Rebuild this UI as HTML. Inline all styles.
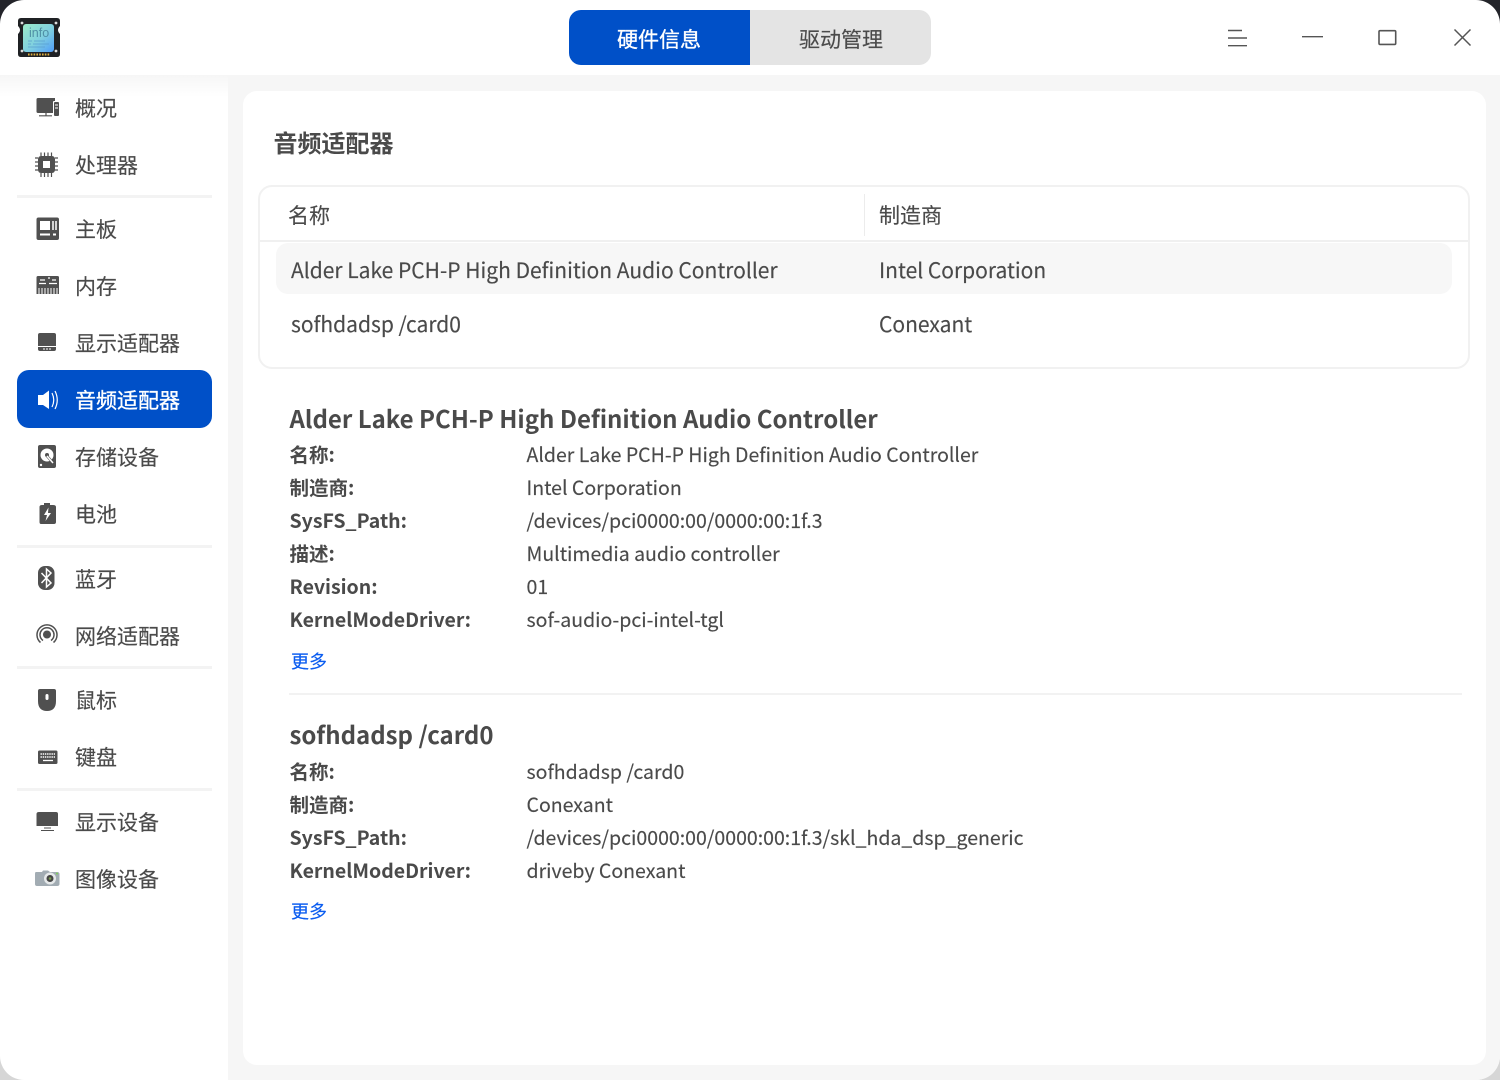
<!DOCTYPE html>
<html><head><meta charset="utf-8">
<style>
html,body{margin:0;padding:0;width:1500px;height:1080px;overflow:hidden;background:#fff}
body{font-family:"Noto Sans CJK SC","Liberation Sans",sans-serif;color:#414d68;position:relative}
.t{position:absolute;white-space:nowrap;line-height:30px;height:30px;color:#4a4a4a;-webkit-text-stroke:.15px currentColor}
.s{font-size:21px;left:75px}
.r{font-size:21px}
.d{font-size:19.5px}
.b{font-weight:700;left:289.500px;color:#4a4a4a;-webkit-text-stroke:0}
.v{left:526.500px}
.h{font-size:24px;font-weight:700;left:289.500px;color:#4a4a4a;-webkit-text-stroke:0}
.m{font-size:18px;left:291px;color:#0a5cf0}
.a{position:absolute}
svg{position:absolute;overflow:visible}
</style></head><body>
<!-- corners -->
<svg width="1500" height="1080" style="left:0;top:0">
<path d="M0 0H24A24 24 0 0 0 0 24Z" fill="#23242a"/>
<path d="M1500 0H1476A24 24 0 0 1 1500 24Z" fill="#23242a"/>
<path d="M0 1080H24A24 24 0 0 1 0 1056Z" fill="#d6d6d6"/>
<path d="M1500 1080H1476A24 24 0 0 0 1500 1056Z" fill="#d6d6d6"/>
</svg>
<!-- main bg -->
<div class="a" style="left:228px;top:75px;width:1272px;height:1005px;background:#f6f6f6;border-bottom-right-radius:24px"></div>
<div class="a" style="left:0;top:75px;width:228px;height:22px;background:linear-gradient(#f6f6f6,#fff)"></div>
<div class="a" style="left:243px;top:91px;width:1243px;height:974px;background:#fff;border-radius:14px"></div>
<!-- logo -->
<svg width="44" height="42" style="left:17px;top:17px" viewBox="0 0 44 42">
<defs><linearGradient id="g" x1="0" y1="0" x2="1" y2="1"><stop offset="0" stop-color="#9cecc8"/><stop offset=".55" stop-color="#7fcfe0"/><stop offset="1" stop-color="#4f9cf8"/></linearGradient></defs>
<path d="M4 1H40Q43 1 43 4V9Q41 11 41 13T43 17V37Q43 40 40 40H4Q1 40 1 37V17Q3 15 3 13T1 9V4Q1 1 4 1Z" fill="#1f2124"/>
<rect x="6" y="7" width="31" height="28" rx="3" fill="url(#g)"/>
<circle cx="5" cy="6" r="1.400" fill="#ddd"/><circle cx="39" cy="6" r="1.400" fill="#ddd"/><circle cx="5" cy="34" r="1.400" fill="#ddd"/><circle cx="39" cy="34" r="1.400" fill="#ddd"/>
<path d="M11 37.500H33" stroke="#e0b040" stroke-width="2" stroke-dasharray="1.600 1.200"/>
<path d="M11 24H15M17 24H28M11 27H14M16 27H32M11 30H28" stroke="#5a9fd0" stroke-width="1.200" opacity=".6"/>
<text x="12" y="20" font-family="Liberation Sans" font-size="12.500" fill="#4f8fa6">info</text>
</svg>
<!-- tabs -->
<div class="a" style="left:569px;top:10px;width:181px;height:55px;background:#0050c8;border-radius:12px 0 0 12px"></div>
<div class="a" style="left:750px;top:10px;width:181px;height:55px;background:#e4e4e4;border-radius:0 12px 12px 0"></div>
<div class="t" style="left:617px;top:24px;font-size:21px;color:#fff;-webkit-text-stroke:.35px #fff">硬件信息</div>
<div class="t" style="left:799px;top:24px;font-size:21px;color:#4a4a4a">驱动管理</div>
<!-- window buttons -->
<svg width="300" height="60" style="left:1200px;top:0" fill="none" stroke="#555" stroke-width="1.400">
<path d="M28 30.500H42M28 38H47M28 45.700H47"/>
<path d="M102 36.700H123"/>
<rect x="179" y="30.700" width="16.700" height="13.700" rx="1" stroke-width="1.600"/>
<path d="M254.500 29.500L270.500 45.500M270.500 29.500L254.500 45.500" stroke-width="1.500"/>
</svg>
<!-- sidebar dividers -->
<div class="a" style="left:17px;top:195px;width:195px;height:3px;background:#f3f3f3"></div>
<div class="a" style="left:17px;top:545px;width:195px;height:3px;background:#f3f3f3"></div>
<div class="a" style="left:17px;top:666px;width:195px;height:3px;background:#f3f3f3"></div>
<div class="a" style="left:17px;top:788px;width:195px;height:3px;background:#f3f3f3"></div>
<div class="a" style="left:17px;top:370px;width:195px;height:57.500px;background:#0050c8;border-radius:12px"></div>
<!-- sidebar icons -->
<svg width="228" height="900" style="left:0;top:0" fill="#505050">
<!-- overview -->
<path d="M38 98H55V113H38Q36.500 113 36.500 111.500V99.500Q36.500 98 38 98Z"/><path d="M39 115.800H52M46 113V116" stroke="#505050" stroke-width="1.200"/>
<rect x="53" y="101" width="6" height="15" rx="1" fill="#fff"/><rect x="54" y="102" width="5" height="14" rx="1"/><path d="M55 105H58M55 108H58" stroke="#fff"/>
<!-- cpu -->
<rect x="38" y="156" width="17" height="17" rx="3"/><rect x="43" y="161" width="7" height="7" fill="#fff"/>
<path d="M41 152.500V156M44.500 152.500V156M48 152.500V156M51.500 152.500V156M41 173V177M44.500 173V177M48 173V177M51.500 173V177M35 158H38M35 162H38M35 166H38M35 170H38M55 158H58M55 162H58M55 166H58M55 170H58" stroke="#505050" stroke-width="1.200"/>
<!-- board -->
<rect x="36.500" y="217.500" width="22.500" height="22.500" rx="2"/><rect x="40" y="221" width="10" height="9" fill="#fff"/><path d="M53 221V230M56 221V230" stroke="#fff" stroke-width="1.500"/><path d="M40 234.500H50M53 234.500H56" stroke="#fff" stroke-width="2"/>
<!-- memory -->
<path d="M38 276H57.500Q59 276 59 277.500V294H36.500V277.500Q36.500 276 38 276Z"/><path d="M40 280H45M48 278H50M52 280H56M39 283.500H46M49 283.500H57" stroke="#fff" stroke-width="1.200"/><path d="M39 288V294M42 288V294M45 288V294M48 288V294M51 288V294M54 288V294M57 288V294" stroke="#fff" stroke-width="1"/>
<!-- display adapter -->
<path d="M40 333H54Q56 333 56 335V346H38V335Q38 333 40 333Z"/><path d="M38 347H56V349Q56 351 54 351H40Q38 351 38 349Z"/><path d="M43 349H51" stroke="#fff" stroke-width="1" stroke-dasharray="2 1"/>
<!-- sound -->
<path d="M38 395H43L49 390.500V409L43 405H38Z" fill="#fff"/><path d="M52 393Q55.500 400 52 407M55 391Q59.500 400 55 409" fill="none" stroke="#fff" stroke-width="1.200"/>
<!-- hdd -->
<path d="M40 445H54Q56 445 56 447V466Q56 468 54 468H40Q38 468 38 466V447Q38 445 40 445Z"/><circle cx="47" cy="455" r="6.500" fill="#fff"/><circle cx="47" cy="455" r="2" fill="#505050"/><path d="M47 456L54 464" stroke="#505050" stroke-width="2.500"/><path d="M47 456L53 463" stroke="#fff" stroke-width="1.500"/><circle cx="41" cy="465" r="1.200" fill="#fff"/>
<!-- battery -->
<path d="M44 503H50V505H53Q56 505 56 507V522Q56 524 54 524H41Q39.500 524 39.500 522V507Q39.500 505 42 505H44Z"/><path d="M48.500 507.500L44 515H47L45.500 521L51 513H48Z" fill="#fff"/>
<!-- bluetooth -->
<rect x="38" y="566" width="16.500" height="24" rx="7"/><path d="M41.500 573L51 583L46.500 587V569L51 573L41.500 583" fill="none" stroke="#fff" stroke-width="1.500"/>
<!-- network -->
<circle cx="47" cy="634.500" r="4"/><path d="M40.500 642.500A10 10 0 1 1 53.500 642.500M43 640.500A7 7 0 1 1 51 640.500" fill="none" stroke="#505050" stroke-width="1.500"/>
<!-- mouse -->
<path d="M40 689H54Q56 689 56 691V701Q56 711 47 711Q38 711 38 701V691Q38 689 40 689Z"/><rect x="45.500" y="694" width="3" height="6" rx="1.500" fill="#fff"/>
<!-- keyboard -->
<rect x="38" y="750.500" width="19.500" height="13.500" rx="1.500"/><path d="M40.500 754H55M40.500 757H55" stroke="#fff" stroke-width="1.500" stroke-dasharray="1.400 .8"/><path d="M43 760.500H53" stroke="#fff" stroke-width="1.300"/>
<!-- monitor -->
<path d="M39 812H56Q58 812 58 814V826H36.500V814Q36.500 812 39 812Z"/><path d="M44 828H51M41 830.500H54" stroke="#505050" stroke-width="1"/>
<!-- camera -->
<path d="M36 872H42L43 870.500H48L50 872H57Q59.500 872 59.500 874V884Q59.500 886 57 886H37Q35 886 35 884V874Q35 872 36 872Z" fill="#a2acb3"/><circle cx="50" cy="878.500" r="6" fill="#e6e9ea"/><circle cx="50" cy="878.500" r="3.500" fill="#444"/><circle cx="50" cy="878.500" r="1.300" fill="#7a9a50"/><circle cx="57" cy="873.500" r="1" fill="#7ccf5a"/>
</svg>
<!-- sidebar text -->
<div class="t s" style="top:93px">概况</div>
<div class="t s" style="top:150px">处理器</div>
<div class="t s" style="top:214px">主板</div>
<div class="t s" style="top:271px">内存</div>
<div class="t s" style="top:328px">显示适配器</div>
<div class="t s" style="top:385px;color:#fff;-webkit-text-stroke:.35px #fff">音频适配器</div>
<div class="t s" style="top:442px">存储设备</div>
<div class="t s" style="top:499px">电池</div>
<div class="t s" style="top:564px">蓝牙</div>
<div class="t s" style="top:621px">网络适配器</div>
<div class="t s" style="top:685px">鼠标</div>
<div class="t s" style="top:742px">键盘</div>
<div class="t s" style="top:807px">显示设备</div>
<div class="t s" style="top:864px">图像设备</div>
<!-- content -->
<div class="t" style="left:273.500px;top:126.500px;font-size:24px;font-weight:700;color:#4a4a4a;-webkit-text-stroke:0">音频适配器</div>
<div class="a" style="left:258px;top:185px;width:1208px;height:180px;border:2px solid #f1f1f1;border-radius:14px"></div>
<div class="a" style="left:260px;top:240px;width:1208px;height:2px;background:#f0f0f0"></div>
<div class="a" style="left:864px;top:194px;width:1px;height:42px;background:#ececec"></div>
<div class="a" style="left:276px;top:243px;width:1176px;height:51px;background:#f7f7f7;border-radius:12px"></div>
<div class="t" style="left:288px;top:200px;font-size:21px">名称</div>
<div class="t" style="left:879px;top:200px;font-size:21px">制造商</div>
<div class="t r" style="left:291px;top:255px">Alder Lake PCH-P High Definition Audio Controller</div>
<div class="t r" style="left:879px;top:255px">Intel Corporation</div>
<div class="t r" style="left:291px;top:309px">sofhdadsp /card0</div>
<div class="t r" style="left:879px;top:309px">Conexant</div>
<!-- detail 1 -->
<div class="t h" style="top:403px">Alder Lake PCH-P High Definition Audio Controller</div>
<div class="t d b" style="top:439px">名称:</div><div class="t d v" style="top:439px">Alder Lake PCH-P High Definition Audio Controller</div>
<div class="t d b" style="top:472px">制造商:</div><div class="t d v" style="top:472px">Intel Corporation</div>
<div class="t d b" style="top:505px">SysFS_Path:</div><div class="t d v" style="top:505px">/devices/pci0000:00/0000:00:1f.3</div>
<div class="t d b" style="top:538px">描述:</div><div class="t d v" style="top:538px">Multimedia audio controller</div>
<div class="t d b" style="top:571px">Revision:</div><div class="t d v" style="top:571px">01</div>
<div class="t d b" style="top:604px">KernelModeDriver:</div><div class="t d v" style="top:604px">sof-audio-pci-intel-tgl</div>
<div class="t m" style="top:646px">更多</div>
<div class="a" style="left:289px;top:693px;width:1173px;height:2px;background:#f2f2f2"></div>
<!-- detail 2 -->
<div class="t h" style="top:719px">sofhdadsp /card0</div>
<div class="t d b" style="top:756px">名称:</div><div class="t d v" style="top:756px">sofhdadsp /card0</div>
<div class="t d b" style="top:789px">制造商:</div><div class="t d v" style="top:789px">Conexant</div>
<div class="t d b" style="top:822px">SysFS_Path:</div><div class="t d v" style="top:822px">/devices/pci0000:00/0000:00:1f.3/skl_hda_dsp_generic</div>
<div class="t d b" style="top:855px">KernelModeDriver:</div><div class="t d v" style="top:855px">driveby Conexant</div>
<div class="t m" style="top:896px">更多</div>
</body></html>
